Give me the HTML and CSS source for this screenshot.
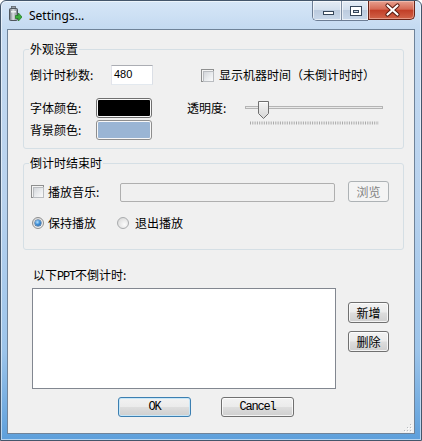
FILE: index.html
```html
<!DOCTYPE html>
<html>
<head>
<meta charset="utf-8">
<title>Settings...</title>
<link rel="stylesheet" href="styles.css">
</head>
<body>
<div class="window">
  <div class="titlebar">
    <svg class="app-icon" width="13" height="16" viewBox="0 0 13 16">
      <defs>
        <linearGradient id="cyl" x1="0" x2="1" y1="0" y2="0">
          <stop offset="0" stop-color="#6d747c"/>
          <stop offset="0.45" stop-color="#d9dde1"/>
          <stop offset="1" stop-color="#7c838b"/>
        </linearGradient>
      </defs>
      <rect x="2.5" y="0.5" width="4" height="2" fill="#9aa1a8" stroke="#5d646b" stroke-width="0.8"/>
      <rect x="0.5" y="2.5" width="8" height="12" rx="1" fill="url(#cyl)" stroke="#4f565d"/>
      <rect x="2" y="5" width="5" height="1.5" fill="#eef1f3"/>
      <path d="M6.5 9.5 h3 v-2.5 l3.5 4 l-3.5 4 v-2.5 h-3 z" fill="#3bab3b" stroke="#1d7a1d" stroke-width="0.7"/>
    </svg>
    <span class="title">Settings...</span>
    <div class="caption">
      <div class="cap-group">
        <span class="cap-btn">
          <svg width="28" height="19" viewBox="0 0 28 19"><rect x="10.5" y="10.5" width="10" height="3" fill="#fff" stroke="#36465a"/></svg>
        </span>
        <span class="cap-btn cap-max">
          <svg width="27" height="19" viewBox="0 0 27 19"><rect x="8.5" y="5.5" width="11" height="9" fill="#fff" stroke="#36465a"/><rect x="11.5" y="9.5" width="5" height="2" fill="#c9d6e6" stroke="#36465a"/></svg>
        </span>
      </div>
      <span class="cap-close">
        <svg width="47" height="19" viewBox="0 0 47 19"><path d="M18.5 5.5 L28.5 14.5 M28.5 5.5 L18.5 14.5" stroke="#5a1a10" stroke-width="4.2" stroke-linecap="round"/><path d="M18.5 5.5 L28.5 14.5 M28.5 5.5 L18.5 14.5" stroke="#fff" stroke-width="2.2" stroke-linecap="round"/></svg>
      </span>
    </div>
  </div>

  <div class="client">
    <fieldset class="group g1">
      <legend>外观设置</legend>
      <div class="row r1">
        <span class="lbl w81">倒计时秒数:</span>
        <span class="textbox">480</span>
        <span class="check show-time"></span>
        <span class="cb-text">显示机器时间（未倒计时时）</span>
      </div>
      <div class="row r2">
        <span class="lbl w66">字体颜色:</span>
        <span class="swatch"><i class="fill black"></i></span>
        <span class="lbl alpha">透明度:</span>
        <svg class="slider" width="144" height="20" viewBox="0 0 144 20">
          <defs>
            <linearGradient id="thumb" x1="0" x2="0" y1="0" y2="1">
              <stop offset="0" stop-color="#f5f5f5"/>
              <stop offset="1" stop-color="#d6d6d6"/>
            </linearGradient>
          </defs>
          <rect x="2.5" y="8.5" width="137" height="2" fill="#e9e9e9" stroke="#b4b4b4"/>
          <line x1="7" y1="25" x2="136" y2="25" stroke="#a9a9a9" stroke-width="3" stroke-dasharray="1 1.3"/>
          <path d="M15.5 3.5 H25.5 V15.5 L20.5 20.5 L15.5 15.5 Z" fill="url(#thumb)" stroke="#6f6f6f"/>
          <path d="M16.5 4.5 H24.5" stroke="#fff"/>
        </svg>
      </div>
      <div class="row r3">
        <span class="lbl w66">背景颜色:</span>
        <span class="swatch light"><i class="fill blue"></i></span>
      </div>
    </fieldset>

    <fieldset class="group g2">
      <legend>倒计时结束时</legend>
      <div class="row ra">
        <span class="check"></span>
        <span class="cb-text music">播放音乐:</span>
        <span class="textbox disabled"></span>
        <span class="btn disabled browse">浏览</span>
      </div>
      <div class="row rb">
        <span class="radio on"></span>
        <span class="radio-text">保持播放</span>
        <span class="radio second"></span>
        <span class="radio-text second-text">退出播放</span>
      </div>
    </fieldset>

    <div class="list-label">以下<span class="mono">PPT</span>不倒计时:</div>
    <div class="list-row">
      <div class="listbox"></div>
      <div class="side-btns">
        <span class="btn small">新增</span>
        <span class="btn small">删除</span>
      </div>
    </div>
    <div class="footer">
      <span class="btn wide default"><span class="mono">OK</span></span>
      <span class="btn wide cancel"><span class="mono">Cancel</span></span>
    </div>

    <svg class="grip" width="10" height="10" viewBox="0 0 10 10">
      <g fill="#fff">
        <rect x="9" y="9" width="1" height="1"/><rect x="6" y="9" width="1" height="1"/><rect x="3" y="9" width="1" height="1"/>
        <rect x="9" y="6" width="1" height="1"/><rect x="6" y="6" width="1" height="1"/><rect x="9" y="3" width="1" height="1"/>
      </g>
      <g fill="#b8bcc0">
        <rect x="8" y="8" width="1" height="1"/><rect x="5" y="8" width="1" height="1"/><rect x="2" y="8" width="1" height="1"/>
        <rect x="8" y="5" width="1" height="1"/><rect x="5" y="5" width="1" height="1"/><rect x="8" y="2" width="1" height="1"/>
      </g>
    </svg>
  </div>
</div>
</body>
</html>
```

FILE: styles.css
```css
* { box-sizing: border-box; }
html, body { margin: 0; padding: 0; }
body {
  width: 422px;
  height: 441px;
  overflow: hidden;
  background: #ffffff;
  font-family: "Noto Sans CJK SC", "Noto Sans", sans-serif;
  font-size: 12px;
  color: #000;
}

.window {
  width: 422px;
  height: 441px;
  border: 1px solid #44566b;
  border-radius: 6px 6px 0 0;
  background: linear-gradient(180deg, #d6e6f7 0, #c4daf1 28px, #b8d2ee 45%, #9cc4ea 80%, #5d9fdb 100%);
  box-shadow: inset 0 0 0 1px rgba(255, 255, 255, 0.55);
  padding: 0 6px 6px;
  display: flex;
  flex-direction: column;
}

.titlebar {
  height: 28px;
  flex: none;
  display: flex;
  align-items: flex-start;
}
.app-icon { margin: 5px 0 0 2px; flex: none; }
.title {
  font-family: "Noto Sans", "Open Sans", sans-serif;
  font-size: 12px;
  line-height: 16px;
  margin: 7px 0 0 7px;
}
.caption { margin-left: auto; display: flex; }
.cap-group {
  display: flex;
  border: 1px solid #6c7d94;
  border-top: none;
  border-right: none;
  border-radius: 0 0 0 5px;
  overflow: hidden;
}
.cap-btn {
  width: 28px;
  height: 19px;
  background: linear-gradient(180deg, #e4ecf5 0, #d4e0ee 45%, #bccbde 50%, #c9d8ea 100%);
  box-shadow: inset 0 0 0 1px rgba(255, 255, 255, 0.6);
}
.cap-btn.cap-max { width: 27px; border-left: 1px solid #7e8ea3; }
.cap-btn svg, .cap-close svg { display: block; }
.cap-close {
  width: 47px;
  height: 19px;
  border: 1px solid #6a2418;
  border-top: none;
  border-radius: 0 0 5px 0;
  background: linear-gradient(180deg, #e7a08f 0, #d66a55 45%, #c23f28 52%, #d2644a 100%);
  box-shadow: inset 0 0 0 1px rgba(255, 220, 210, 0.45);
}
.cap-close svg { margin-top: -1px; }

.client {
  flex: 1;
  border: 1px solid #6f8399;
  background: #f0f0f0;
  position: relative;
  display: flex;
  flex-direction: column;
}

.group {
  margin: 0 10px 0 15px;
  border: 1px solid #d5dfe5;
  border-radius: 3px;
  padding: 0;
  min-width: 0;
}
.group legend {
  margin-left: 5px;
  padding: 0 1px;
  font-size: 12px;
  line-height: 14px;
}
.g1 { margin-top: 12px; padding: 9px 0 8px; }
.g2 { margin-top: 7px; padding: 11px 0 16px; }

.row { display: flex; align-items: center; }
.r1, .r2, .r3 { height: 20px; padding-left: 6px; }
.r2 { margin-top: 13px; }
.r3 { margin-top: 2px; }

.lbl { flex: none; line-height: 14px; white-space: nowrap; }
.w81 { width: 81px; }
.w66 { width: 66px; }
.alpha { margin-left: 35px; width: 44px; }

.textbox {
  flex: none;
  width: 42px;
  height: 20px;
  background: #fff;
  border: 1px solid;
  border-color: #abadb3 #dbdfe6 #e3e9ef #e2e3ea;
  font-family: "Liberation Sans", sans-serif;
  font-size: 11px;
  line-height: 16px;
  padding-left: 2px;
}
.textbox.disabled {
  width: 215px;
  height: 19px;
  background: #f0f0f0;
  border: 1px solid #afafaf;
  border-radius: 2px;
  margin-top: 2px;
}

.check {
  flex: none;
  width: 13px;
  height: 13px;
  border: 1px solid #8e8f8f;
  background: #f4f4f4;
  padding: 1px;
}
.check::before {
  content: "";
  display: block;
  width: 100%;
  height: 100%;
  border: 1px solid #b9bcc0;
  background: linear-gradient(135deg, #d3d6da 0, #eceef0 60%, #fafafa 100%);
}
.show-time { margin-left: 48px; }
.cb-text { margin-left: 5px; line-height: 14px; white-space: nowrap; }
.cb-text.music { margin-left: 4px; width: 72px; flex: none; }

.swatch {
  flex: none;
  width: 56px;
  height: 20px;
  border: 1px solid #6f6f6f;
  border-radius: 3px;
  background: #f7f7f7;
  padding: 1px;
  display: flex;
}
.swatch.light { border-color: #8d8d8d; }
.fill { flex: 1; border-radius: 1px; }
.fill.black { background: #000; }
.fill.blue { background: #9ab5d4; }

.slider { flex: none; margin-left: 12px; overflow: visible; }

.ra { height: 21px; padding-left: 7px; }
.rb { height: 20px; padding-left: 8px; margin-top: 11px; }

.btn {
  flex: none;
  display: flex;
  align-items: center;
  justify-content: center;
  border: 1px solid #707070;
  border-radius: 3px;
  background: linear-gradient(180deg, #f2f2f2 0, #ebebeb 48%, #dddddd 52%, #cfcfcf 100%);
  box-shadow: inset 0 0 0 1px rgba(255, 255, 255, 0.75);
  line-height: 14px;
  white-space: nowrap;
}
.btn.disabled {
  border-color: #adb2b5;
  background: #f4f4f4;
  box-shadow: none;
  color: #838383;
}
.browse { margin-left: 13px; width: 41px; height: 21px; }

.radio {
  flex: none;
  width: 12px;
  height: 12px;
  border-radius: 50%;
  border: 1px solid #8e8f8f;
  background: radial-gradient(circle at 65% 65%, #fbfbfb 0, #e6e6e6 55%, #cfcfcf 100%);
  display: flex;
  align-items: center;
  justify-content: center;
}
.radio.on::before {
  content: "";
  width: 6px;
  height: 6px;
  border-radius: 50%;
  background: radial-gradient(circle at 40% 35%, #b7e3ff 0, #3f8fd6 45%, #1c5393 100%);
  box-shadow: 0 0 0 0.5px #1a4a80;
}
.radio-text { margin-left: 4px; width: 48px; flex: none; line-height: 14px; }
.radio.second { margin-left: 21px; border-color: #a9abad; }
.radio-text.second-text { margin-left: 6px; }

.mono {
  font-family: "Liberation Mono", monospace;
  font-size: 12px;
  letter-spacing: -1.2px;
}

.list-label {
  margin: 18px 0 0 25px;
  line-height: 14px;
  height: 14px;
  white-space: nowrap;
}
.list-row {
  display: flex;
  margin-top: 6px;
  padding-left: 24px;
}
.listbox {
  flex: none;
  width: 304px;
  height: 101px;
  background: #fff;
  border: 1px solid #828790;
}
.side-btns {
  display: flex;
  flex-direction: column;
  gap: 8px;
  margin-left: 12px;
  padding-top: 14px;
}
.btn.small { width: 41px; height: 21px; }

.footer {
  display: flex;
  margin-top: 8px;
  padding-left: 110px;
}
.btn.wide { width: 73px; height: 20px; }
.btn.default {
  border-color: #3c7fb1;
  box-shadow: inset 0 0 0 1px #c6e6f8;
}
.btn.cancel { margin-left: 30px; }

.grip { position: absolute; right: 2px; bottom: 1px; }
```
